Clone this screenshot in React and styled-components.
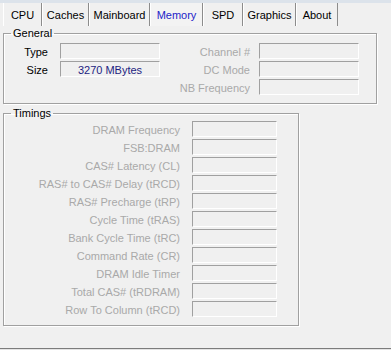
import React from 'react';
import styled, { createGlobalStyle } from 'styled-components';

const Global = createGlobalStyle`
  html, body { margin: 0; padding: 0; background: #f0f0f0; }
  body { font-family: "Liberation Sans", Arial, sans-serif; font-size: 11px; color: #000; }
  * { box-sizing: border-box; }
`;

const Window = styled.div`
  width: 391px;
  height: 350px;
  background: #f0f0f0;
  display: flex;
  flex-direction: column;
  overflow: hidden;
`;

const TopBand = styled.div`
  flex: none;
  height: 3px;
  background: #dce3eb;
`;

const TabBar = styled.div`
  flex: none;
  display: flex;
  height: 23px;
  padding-left: 3px;
`;

const Tab = styled.div`
  width: ${p => p.$w}px;
  height: 100%;
  padding-top: 6px;
  line-height: 13px;
  text-align: center;
  border-left: 1px solid #ffffff;
  border-right: 1px solid #8c8c8c;
  color: ${p => (p.$active ? '#2323c8' : '#000')};
  background: ${p => (p.$active ? '#f3f3f3' : 'transparent')};
`;

const Panel = styled.div`
  flex: 1;
  display: flex;
  flex-direction: column;
  padding-left: 3px;
  gap: 2px;
`;

const Group = styled.fieldset`
  margin: 0;
  width: ${p => p.$w}px;
  min-inline-size: 0;
  border: 1px solid #a0a0a0;
  box-shadow: inset 1px 1px 0 #ffffff, 1px 1px 0 #ffffff;
  padding: ${p => p.$pt}px 0 ${p => p.$pb}px 0;
`;

const Legend = styled.legend`
  margin-left: 7px;
  padding: 0 2px;
  line-height: 14px;
  font-size: 11px;
  color: #000;
`;

const GeneralGrid = styled.div`
  display: grid;
  grid-template-columns: 56px 100px 99px 100px;
  grid-auto-rows: 16px;
  row-gap: 2px;
`;

const TimingGrid = styled.div`
  display: grid;
  grid-template-columns: 188px 85px;
  grid-auto-rows: 16px;
  row-gap: 2px;
`;

const Label = styled.div`
  grid-column: ${p => p.$col};
  grid-row: ${p => p.$row};
  text-align: right;
  white-space: nowrap;
  line-height: 16px;
  padding-top: 1px;
  padding-right: ${p => p.$gap}px;
  color: ${p => (p.$disabled ? '#a9a9a9' : '#000')};
`;

const Field = styled.div`
  grid-column: ${p => p.$col};
  grid-row: ${p => p.$row};
  height: 16px;
  border-top: 1px solid #a0a0a0;
  border-left: 1px solid #a0a0a0;
  border-right: 1px solid #ffffff;
  border-bottom: 1px solid #ffffff;
  background: #f0f0f0;
  text-align: center;
  line-height: 14px;
  padding-top: 1px;
  color: #1e1e82;
  white-space: nowrap;
`;

const BottomEdge = styled.div`
  flex: none;
  height: 2px;
  border-top: 1px solid #7c7c7c;
  background: #e4e4e4;
`;

const tabs = [
  { name: 'CPU', w: 39 },
  { name: 'Caches', w: 47 },
  { name: 'Mainboard', w: 61 },
  { name: 'Memory', w: 53, active: true },
  { name: 'SPD', w: 40 },
  { name: 'Graphics', w: 53 },
  { name: 'About', w: 42 },
];

const timings = [
  'DRAM Frequency',
  'FSB:DRAM',
  'CAS# Latency (CL)',
  'RAS# to CAS# Delay (tRCD)',
  'RAS# Precharge (tRP)',
  'Cycle Time (tRAS)',
  'Bank Cycle Time (tRC)',
  'Command Rate (CR)',
  'DRAM Idle Timer',
  'Total CAS# (tRDRAM)',
  'Row To Column (tRCD)',
];

export default function App() {
  return (
    <Window>
      <Global />
      <TopBand />
      <TabBar>
        {tabs.map(t => (
          <Tab key={t.name} $w={t.w} $active={t.active}>
            {t.name}
          </Tab>
        ))}
      </TabBar>
      <Panel>
        <Group $w={374} $pt={3} $pb={8}>
          <Legend>General</Legend>
          <GeneralGrid>
            <Label $col={1} $row={1} $gap={12}>Type</Label>
            <Field $col={2} $row={1} />
            <Label $col={1} $row={2} $gap={12}>Size</Label>
            <Field $col={2} $row={2}>3270 MBytes</Field>
            <Label $col={3} $row={1} $gap={9} $disabled>Channel #</Label>
            <Field $col={4} $row={1} />
            <Label $col={3} $row={2} $gap={9} $disabled>DC Mode</Label>
            <Field $col={4} $row={2} />
            <Label $col={3} $row={3} $gap={9} $disabled>NB Frequency</Label>
            <Field $col={4} $row={3} />
          </GeneralGrid>
        </Group>
        <Group $w={296} $pt={1} $pb={8}>
          <Legend>Timings</Legend>
          <TimingGrid>
            {timings.map((t, i) => (
              <React.Fragment key={t}>
                <Label $col={1} $row={i + 1} $gap={12} $disabled>{t}</Label>
                <Field $col={2} $row={i + 1} />
              </React.Fragment>
            ))}
          </TimingGrid>
        </Group>
      </Panel>
      <BottomEdge />
    </Window>
  );
}
